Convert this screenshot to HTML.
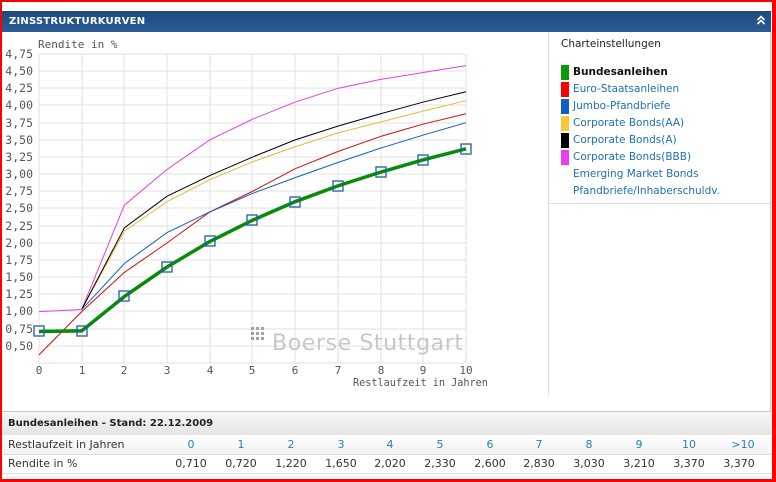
<!DOCTYPE html><html><head><meta charset="utf-8"><style>
*{margin:0;padding:0;box-sizing:border-box}
body{width:776px;height:482px;position:relative;background:#fff;overflow:hidden;font-family:"DejaVu Sans","Liberation Sans",sans-serif}
.a{position:absolute}
.leg{position:absolute;left:561px;font-size:10.5px;color:#1f6fb0;white-space:nowrap}
.sw{position:absolute;left:561px;width:8px;height:15px}
.t{position:absolute;font-size:11px;color:#333;white-space:nowrap}
</style></head><body>
<div class="a" style="left:0;top:0;width:776px;height:482px;border:2px solid #f00;border-right-width:4px;border-bottom-width:3px"></div>
<div class="a" style="left:2px;top:11px;width:769px;height:21px;background:linear-gradient(#1d4a80,#2b5c96);"></div>
<div class="a" style="left:9px;top:16px;color:#fff;font-weight:bold;font-size:10px;letter-spacing:0.2px">ZINSSTRUKTURKURVEN</div>
<svg class="a" style="left:756px;top:15px" width="10" height="12"><path d="M1.5 5 L5 1.5 L8.5 5 M1.5 9 L5 5.5 L8.5 9" stroke="#fff" stroke-width="1.6" fill="none"/></svg>
<div class="a" style="left:770px;top:32px;width:1px;height:380px;background:#ccc"></div>
<div class="a" style="left:548px;top:32px;width:1px;height:363px;background:#ddd"></div>
<div class="a" style="left:549px;top:203px;width:221px;height:1px;background:#ddd"></div>
<div class="t" style="left:561px;top:38px;font-size:10.5px;color:#222">Charteinstellungen</div>
<div class="sw" style="top:65px;background:#0a9a0a"></div><div class="leg" style="left:573px;top:66px;color:#111;font-weight:bold">Bundesanleihen</div>
<div class="sw" style="top:82px;background:#f00"></div><div class="leg" style="left:573px;top:83px">Euro-Staatsanleihen</div>
<div class="sw" style="top:99px;background:#0a5fc8"></div><div class="leg" style="left:573px;top:100px">Jumbo-Pfandbriefe</div>
<div class="sw" style="top:116px;background:#f8c838"></div><div class="leg" style="left:573px;top:117px">Corporate Bonds(AA)</div>
<div class="sw" style="top:133px;background:#000"></div><div class="leg" style="left:573px;top:134px">Corporate Bonds(A)</div>
<div class="sw" style="top:150px;background:#f03cf0"></div><div class="leg" style="left:573px;top:151px">Corporate Bonds(BBB)</div>
<div class="leg" style="left:573px;top:168px">Emerging Market Bonds</div>
<div class="leg" style="left:573px;top:185px">Pfandbriefe/Inhaberschuldv.</div>
<svg class="a" style="left:0;top:0" width="548" height="400" font-family="DejaVu Sans Mono,Liberation Mono,monospace" font-size="11" fill="#555">
<g stroke="#e2e2e2" stroke-width="1">
<line x1="39" y1="54" x2="466" y2="54"/><line x1="39" y1="71" x2="466" y2="71"/><line x1="39" y1="88" x2="466" y2="88"/><line x1="39" y1="105" x2="466" y2="105"/><line x1="39" y1="123" x2="466" y2="123"/><line x1="39" y1="140" x2="466" y2="140"/><line x1="39" y1="157" x2="466" y2="157"/><line x1="39" y1="174" x2="466" y2="174"/><line x1="39" y1="191" x2="466" y2="191"/><line x1="39" y1="208" x2="466" y2="208"/><line x1="39" y1="226" x2="466" y2="226"/><line x1="39" y1="243" x2="466" y2="243"/><line x1="39" y1="260" x2="466" y2="260"/><line x1="39" y1="277" x2="466" y2="277"/><line x1="39" y1="294" x2="466" y2="294"/><line x1="39" y1="311" x2="466" y2="311"/><line x1="39" y1="329" x2="466" y2="329"/><line x1="39" y1="346" x2="466" y2="346"/><line x1="39" y1="363" x2="466" y2="363"/>
<line x1="39" y1="54" x2="39" y2="363"/><line x1="82" y1="54" x2="82" y2="363"/><line x1="124" y1="54" x2="124" y2="363"/><line x1="167" y1="54" x2="167" y2="363"/><line x1="210" y1="54" x2="210" y2="363"/><line x1="252" y1="54" x2="252" y2="363"/><line x1="295" y1="54" x2="295" y2="363"/><line x1="338" y1="54" x2="338" y2="363"/><line x1="381" y1="54" x2="381" y2="363"/><line x1="423" y1="54" x2="423" y2="363"/><line x1="466" y1="54" x2="466" y2="363"/>
</g>
<text x="38" y="48">Rendite in %</text>
<g text-anchor="end" font-size="11.5"><text x="33" y="58">4,75</text><text x="33" y="75">4,50</text><text x="33" y="92">4,25</text><text x="33" y="109">4,00</text><text x="33" y="127">3,75</text><text x="33" y="144">3,50</text><text x="33" y="161">3,25</text><text x="33" y="178">3,00</text><text x="33" y="195">2,75</text><text x="33" y="212">2,50</text><text x="33" y="230">2,25</text><text x="33" y="247">2,00</text><text x="33" y="264">1,75</text><text x="33" y="281">1,50</text><text x="33" y="298">1,25</text><text x="33" y="315">1,00</text><text x="33" y="333">0,75</text><text x="33" y="350">0,50</text></g>
<g text-anchor="middle"><text x="39" y="374">0</text><text x="82" y="374">1</text><text x="124" y="374">2</text><text x="167" y="374">3</text><text x="210" y="374">4</text><text x="252" y="374">5</text><text x="295" y="374">6</text><text x="338" y="374">7</text><text x="381" y="374">8</text><text x="423" y="374">9</text><text x="466" y="374">10</text></g>
<text x="353" y="386" font-size="10.2">Restlaufzeit in Jahren</text>
<g fill="#9aa4b4"><rect x="251" y="327" width="3" height="3"/><rect x="256" y="327" width="3" height="3"/><rect x="261" y="327" width="3" height="3"/><rect x="251" y="332" width="3" height="3"/><rect x="256" y="332" width="3" height="3"/><rect x="261" y="332" width="3" height="3"/><rect x="251" y="337" width="3" height="3"/><rect x="256" y="337" width="3" height="3"/><rect x="261" y="337" width="3" height="3"/></g>
<text x="272" y="350" font-family="DejaVu Sans,sans-serif" font-size="22" letter-spacing="0.6" fill="#c4c8ce">Boerse Stuttgart</text>
<g transform="matrix(42.7 0 0 -68.7 39 380.3)" fill="none">
<polyline vector-effect="non-scaling-stroke" stroke="#e040e0" stroke-width="1" points="0,1 1,1.03 2,2.55 3,3.07 4,3.5 5,3.8 6,4.05 7,4.25 8,4.38 9,4.48 10,4.58"/>
<polyline vector-effect="non-scaling-stroke" stroke="#e8b830" stroke-width="1" points="1,1.03 2,2.17 3,2.6 4,2.92 5,3.18 6,3.4 7,3.6 8,3.76 9,3.92 10,4.07"/>
<polyline vector-effect="non-scaling-stroke" stroke="#000" stroke-width="1" points="1,1.03 2,2.22 3,2.68 4,2.98 5,3.25 6,3.5 7,3.7 8,3.88 9,4.05 10,4.2"/>
<polyline vector-effect="non-scaling-stroke" stroke="#d01010" stroke-width="1" points="0,0.37 1,1.0 2,1.57 3,2.0 4,2.45 5,2.75 6,3.08 7,3.33 8,3.55 9,3.73 10,3.88"/>
<polyline vector-effect="non-scaling-stroke" stroke="#1060c0" stroke-width="1" points="1,1.03 2,1.7 3,2.15 4,2.45 5,2.72 6,2.95 7,3.17 8,3.38 9,3.57 10,3.75"/>
<polyline vector-effect="non-scaling-stroke" stroke="#0a8a0a" stroke-width="3.5" points="0,0.71 1,0.72 2,1.22 3,1.65 4,2.02 5,2.33 6,2.6 7,2.83 8,3.03 9,3.21 10,3.37"/>
</g>
<g fill="none" stroke="#1a5fa8" stroke-width="1.3">
<rect x="34" y="326" width="10" height="10"/><rect x="77" y="326" width="10" height="10"/><rect x="119" y="291" width="10" height="10"/><rect x="162" y="262" width="10" height="10"/><rect x="205" y="236" width="10" height="10"/><rect x="247" y="215" width="10" height="10"/><rect x="290" y="197" width="10" height="10"/><rect x="333" y="181" width="10" height="10"/><rect x="376" y="167" width="10" height="10"/><rect x="418" y="155" width="10" height="10"/><rect x="461" y="144" width="10" height="10"/>
</g>
</svg>
<div class="a" style="left:2px;top:411px;width:769px;height:1px;background:#ccc"></div>
<div class="a" style="left:2px;top:412px;width:769px;height:23px;background:linear-gradient(#f6f6f6,#e4e4e4)"></div>
<div class="t" style="left:8px;top:418px;font-weight:bold;font-size:10px;color:#222">Bundesanleihen - Stand: 22.12.2009</div>
<div class="a" style="left:2px;top:435px;width:769px;height:20px;background:linear-gradient(#fff,#f2f2f2);border-bottom:1px solid #ddd"></div>
<div class="a" style="left:2px;top:473px;width:769px;height:1px;background:#ddd"></div>
<div class="t" style="left:8px;top:438px">Restlaufzeit in Jahren</div>
<div class="t" style="left:8px;top:457px">Rendite in %</div>
<div class="t" style="left:191px;top:438px;color:#2b7bc0;transform:translateX(-50%)">0</div>
<div class="t" style="left:241px;top:438px;color:#2b7bc0;transform:translateX(-50%)">1</div>
<div class="t" style="left:291px;top:438px;color:#2b7bc0;transform:translateX(-50%)">2</div>
<div class="t" style="left:341px;top:438px;color:#2b7bc0;transform:translateX(-50%)">3</div>
<div class="t" style="left:390px;top:438px;color:#2b7bc0;transform:translateX(-50%)">4</div>
<div class="t" style="left:440px;top:438px;color:#2b7bc0;transform:translateX(-50%)">5</div>
<div class="t" style="left:490px;top:438px;color:#2b7bc0;transform:translateX(-50%)">6</div>
<div class="t" style="left:539px;top:438px;color:#2b7bc0;transform:translateX(-50%)">7</div>
<div class="t" style="left:589px;top:438px;color:#2b7bc0;transform:translateX(-50%)">8</div>
<div class="t" style="left:639px;top:438px;color:#2b7bc0;transform:translateX(-50%)">9</div>
<div class="t" style="left:689px;top:438px;color:#2b7bc0;transform:translateX(-50%)">10</div>
<div class="t" style="left:743px;top:438px;color:#2b7bc0;transform:translateX(-50%)">&gt;10</div>
<div class="t" style="left:191px;top:457px;transform:translateX(-50%)">0,710</div>
<div class="t" style="left:241px;top:457px;transform:translateX(-50%)">0,720</div>
<div class="t" style="left:291px;top:457px;transform:translateX(-50%)">1,220</div>
<div class="t" style="left:341px;top:457px;transform:translateX(-50%)">1,650</div>
<div class="t" style="left:390px;top:457px;transform:translateX(-50%)">2,020</div>
<div class="t" style="left:440px;top:457px;transform:translateX(-50%)">2,330</div>
<div class="t" style="left:490px;top:457px;transform:translateX(-50%)">2,600</div>
<div class="t" style="left:539px;top:457px;transform:translateX(-50%)">2,830</div>
<div class="t" style="left:589px;top:457px;transform:translateX(-50%)">3,030</div>
<div class="t" style="left:639px;top:457px;transform:translateX(-50%)">3,210</div>
<div class="t" style="left:689px;top:457px;transform:translateX(-50%)">3,370</div>
<div class="t" style="left:739px;top:457px;transform:translateX(-50%)">3,370</div>
</body></html>
